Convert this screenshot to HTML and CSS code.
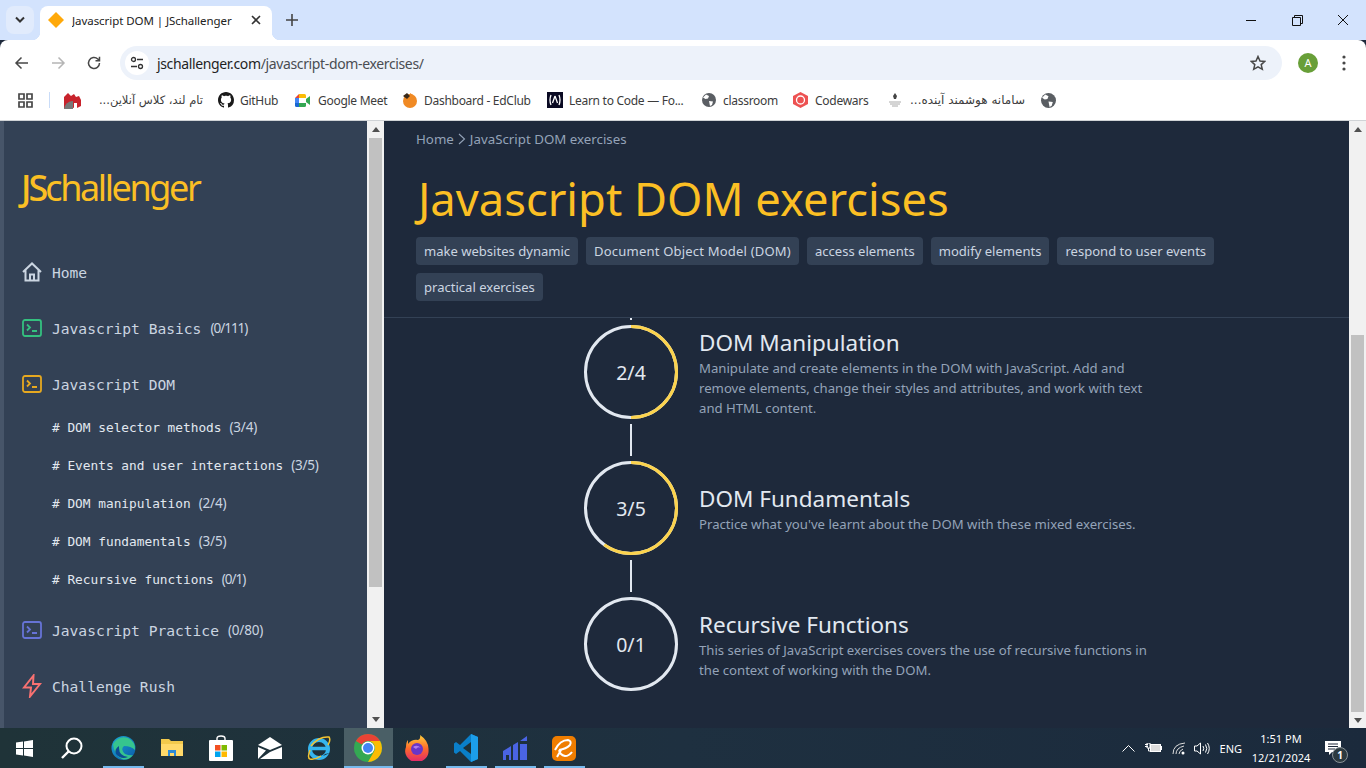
FILE: index.html
```html
<!DOCTYPE html>
<html lang="en">
<head>
<meta charset="utf-8">
<title>Javascript DOM | JSchallenger</title>
<link rel="stylesheet" href="styles.css">
</head>
<body>
<header class="tabstrip">
  <button class="tabsearch"><svg width="12" height="8" viewBox="0 0 12 8"><path d="M2 1.500 6 5.500 10 1.500" class="st-dark" stroke-width="2"/></svg></button>
  <div class="tab">
    <svg class="favicon" width="16" height="16" viewBox="0 0 16 16"><path d="M8 0 16 8 8 16 0 8Z" fill="#ffa90a"/></svg>
    <span class="tabtitle">Javascript DOM | JSchallenger</span>
    <svg class="tabclose" width="10" height="10" viewBox="0 0 10 10"><path d="M1 1 9 9M9 1 1 9" class="st-dark" stroke-width="1.600"/></svg>
  </div>
  <svg class="newtab" width="12" height="12" viewBox="0 0 12 12"><path d="M6 0V12M0 6H12" stroke="#444" stroke-width="1.600" fill="none"/></svg>
  <div class="winctl">
    <svg width="46" height="12" viewBox="0 0 46 12"><path d="M18 6.500H28" stroke="#111" stroke-width="1" fill="none"/></svg>
    <svg width="46" height="12" viewBox="0 0 46 12"><path d="M18.500 3.500H26.500V11.500H18.500ZM20.500 3.500V1.500H28.500V9.500H26.500" stroke="#111" stroke-width="1" fill="none"/></svg>
    <svg width="46" height="12" viewBox="0 0 46 12"><path d="M18 1 28 11M28 1 18 11" stroke="#111" stroke-width="1" fill="none"/></svg>
  </div>
</header>

<div class="toolbar">
  <svg class="navbtn" width="16" height="16" viewBox="0 0 16 16"><path d="M14 8H2M7.500 2.500 2 8l5.500 5.500" stroke="#474747" stroke-width="1.500" fill="none"/></svg>
  <svg class="navbtn" width="16" height="16" viewBox="0 0 16 16"><path d="M2 8H14M8.500 2.500 14 8l-5.500 5.500" stroke="#b5b5b5" stroke-width="1.500" fill="none"/></svg>
  <svg class="navbtn" width="16" height="16" viewBox="0 0 16 16"><path d="M13.500 8A5.500 5.500 0 1 1 11.800 4L13.500 5.600M13.500 1.800V5.800H9.500" stroke="#474747" stroke-width="1.500" fill="none"/></svg>
  <div class="omnibox">
    <span class="siteinfo"><svg width="14" height="14" viewBox="0 0 14 14"><circle cx="3.500" cy="3.500" r="2" stroke="#333" stroke-width="1.300" fill="none"/><path d="M7 3.500H13M1 10.500H7" stroke="#333" stroke-width="1.300"/><circle cx="10.500" cy="10.500" r="2" stroke="#333" stroke-width="1.300" fill="none"/></svg></span>
    <span class="url"><b>jschallenger.com</b>/javascript-dom-exercises/</span>
    <svg class="star" width="16" height="16" viewBox="0 0 16 16"><path d="M8 1.500 10 6l4.800.4-3.600 3.200 1.100 4.700L8 11.800l-4.300 2.500 1.100-4.700L1.200 6.400 6 6Z" stroke="#474747" stroke-width="1.500" fill="none"/></svg>
  </div>
  <span class="avatar">A</span>
  <svg class="kebab" width="4" height="16" viewBox="0 0 4 16"><circle cx="2" cy="2" r="1.600" fill="#474747"/><circle cx="2" cy="8" r="1.600" fill="#474747"/><circle cx="2" cy="14" r="1.600" fill="#474747"/></svg>
</div>

<nav class="bookmarks">
  <svg class="apps" width="15" height="15" viewBox="0 0 15 15"><path d="M1 1h5v5H1ZM9 1h5v5H9ZM1 9h5v5H1ZM9 9h5v5H9Z" stroke="#474747" stroke-width="1.700" fill="none"/></svg>
  <span class="bmsep"></span>
  <a class="bm bm-a"><svg width="17" height="17" viewBox="0 0 17 17"><path d="M0 5 4 1 7 4 10 2 12 5 15 4 17 8V14L13 16V11H10V16L5 14 0 17Z" fill="#c8232c"/><path d="M0 17A9 9 0 0 1 9 9V17Z" fill="#777"/></svg><span class="bmtext rtl" dir="rtl">تام لند، کلاس آنلاین...</span></a>
  <a class="bm bm-b"><svg width="16" height="16" viewBox="0 0 16 16"><path fill="#1a1a1a" d="M8 0C3.580 0 0 3.580 0 8c0 3.540 2.290 6.530 5.470 7.590.4.070.55-.17.55-.38 0-.19-.01-.82-.01-1.490-2.010.37-2.530-.49-2.690-.94-.09-.23-.48-.94-.82-1.130-.28-.15-.68-.52-.01-.53.630-.01 1.080.58 1.230.82.720 1.210 1.870.87 2.330.66.070-.52.280-.87.510-1.070-1.780-.2-3.640-.89-3.640-3.950 0-.87.310-1.590.820-2.150-.08-.2-.360-1.020.08-2.120 0 0 .670-.21 2.200.82.640-.18 1.320-.27 2-.27s1.360.09 2 .27c1.530-1.040 2.200-.82 2.200-.82.440 1.100.160 1.920.080 2.120.510.560.820 1.270.820 2.150 0 3.070-1.870 3.750-3.650 3.950.290.250.540.730.540 1.480 0 1.070-.01 1.930-.01 2.200 0 .210.150.460.550.380A8.010 8.010 0 0 0 16 8c0-4.420-3.580-8-8-8Z"/></svg><span class="bmtext">GitHub</span></a>
  <a class="bm bm-c"><svg width="15" height="13" viewBox="0 0 15 13"><path d="M0 4 4 0V4Z" fill="#ea4335"/><path d="M0 4H4V9H0Z" fill="#4285f4"/><path d="M0 9H4V13H1.500Q0 13 0 11.500Z" fill="#1967d2"/><path d="M4 0H9.500Q11 0 11 1.500V4H4Z" fill="#fbbc04"/><path d="M4 9H11V11.500Q11 13 9.500 13H4Z" fill="#34a853"/><path d="M11 5 15 2V11L11 8Z" fill="#34a853"/></svg><span class="bmtext">Google Meet</span></a>
  <a class="bm bm-d"><svg width="16" height="16" viewBox="0 0 16 16"><circle cx="8" cy="9" r="7" fill="#f08a24"/><path d="M1 4 5 1 8 4 5 7Z" fill="#3a2a1a"/><path d="M8 1 11 3 8 6Z" fill="#f08a24"/></svg><span class="bmtext">Dashboard - EdClub</span></a>
  <a class="bm bm-e"><svg width="16" height="16" viewBox="0 0 16 16"><rect width="16" height="16" fill="#0a0a23"/><path d="M4 3Q2 8 4 13M12 3Q14 8 12 13M8 4 5.500 11M8 4 10.500 11" stroke="#fff" stroke-width="1.300" fill="none"/></svg><span class="bmtext">Learn to Code — Fo...</span></a>
  <a class="bm bm-f"><svg width="14" height="14" viewBox="0 0 14 14"><use href="#globe"/></svg><span class="bmtext">classroom</span></a>
  <a class="bm bm-g"><svg width="15" height="16" viewBox="0 0 15 16"><path d="M7.500 0 15 4V12L7.500 16 0 12V4Z" fill="#ed5252"/><circle cx="7.500" cy="8" r="4" stroke="#fff" stroke-width="1.300" fill="none"/></svg><span class="bmtext">Codewars</span></a>
  <a class="bm bm-h"><svg width="14" height="14" viewBox="0 0 14 14"><path d="M7 0 9 3 8 6H6L5 3Z" fill="#444"/><path d="M1 9H13M2 11H12M4 13H10" stroke="#aaa" stroke-width="1"/></svg><span class="bmtext rtl" dir="rtl">سامانه هوشمند آینده...</span></a>
  <a class="bm"><svg width="15" height="15" viewBox="0 0 14 14"><use href="#globe"/></svg></a>
  <svg class="defs" width="0" height="0"><defs><g id="globe"><circle cx="7" cy="7" r="7" fill="#5a5e63"/><path d="M4 1.500 7 3 6 5.500 3.500 6 1 4.500ZM7 8 11 8.500 10 12 8 13Z" fill="#fff"/></g></defs></svg>
</nav>

<div class="page">
  <aside class="sidebar">
    <a class="logo"><b>JS</b>challenger</a>
    <ul class="menu">
      <li class="mi"><svg class="mi-icon" width="20" height="20" viewBox="0 0 20 20"><path d="M1 10 10 1.500 19 10M3.500 8V18.500H16.500V8M8 18.500V12.500H12V18.500" stroke="#cbd5e1" stroke-width="2" fill="none"/></svg><span class="mono">Home</span></li>
      <li class="mi"><svg class="mi-icon" width="20" height="18" viewBox="0 0 20 18"><rect x="1" y="1" width="18" height="16" rx="2" class="ic ic-g"/><path d="M5 5.500 8 8.500 5 11.500M10 12H15" class="ic ic-g"/></svg><span class="mono">Javascript Basics</span><span class="count tight">(0/111)</span></li>
      <li class="mi active"><svg class="mi-icon" width="20" height="18" viewBox="0 0 20 18"><rect x="1" y="1" width="18" height="16" rx="2" class="ic ic-y"/><path d="M5 5.500 8 8.500 5 11.500M10 12H15" class="ic ic-y"/></svg><span class="mono">Javascript DOM</span></li>
    </ul>
    <ul class="submenu">
      <li class="si"><span class="mono-s"># DOM selector methods</span><span class="count">(3/4)</span></li>
      <li class="si"><span class="mono-s"># Events and user interactions</span><span class="count">(3/5)</span></li>
      <li class="si"><span class="mono-s"># DOM manipulation</span><span class="count">(2/4)</span></li>
      <li class="si"><span class="mono-s"># DOM fundamentals</span><span class="count">(3/5)</span></li>
      <li class="si"><span class="mono-s"># Recursive functions</span><span class="count tight">(0/1)</span></li>
    </ul>
    <ul class="menu">
      <li class="mi"><svg class="mi-icon" width="20" height="18" viewBox="0 0 20 18"><rect x="1" y="1" width="18" height="16" rx="2" class="ic ic-i"/><path d="M5 5.500 8 8.500 5 11.500M10 12H15" class="ic ic-i"/></svg><span class="mono">Javascript Practice</span><span class="count">(0/80)</span></li>
      <li class="mi"><svg class="mi-icon" width="20" height="24" viewBox="0 0 20 24"><path d="M11.500 1.500 2 13.500H9L8 22.500 18 10H11Z" class="ic ic-r"/></svg><span class="mono">Challenge Rush</span></li>
    </ul>
  </aside>
  <div class="scrollbar sb-side">
    <span class="arrow up"></span>
    <span class="thumb"></span>
    <span class="sb-fill"></span>
    <span class="arrow down"></span>
  </div>

  <main class="main">
    <section class="head">
      <p class="crumb">Home <svg width="8" height="12" viewBox="0 0 8 12"><path d="M1 1 6.500 6 1 11" stroke="#94a3b8" stroke-width="1.100" fill="none"/></svg> JavaScript DOM exercises</p>
      <h1>Javascript DOM exercises</h1>
      <ul class="tags">
        <li>make websites dynamic</li>
        <li class="tag-wide">Document Object Model (DOM)</li>
        <li>access elements</li>
        <li>modify elements</li>
        <li>respond to user events</li>
        <li>practical exercises</li>
      </ul>
    </section>
    <section class="steps">
      <span class="tick"></span>
      <article class="step">
        <div class="ring"><svg width="94" height="94" viewBox="0 0 94 94"><circle class="r-bg" cx="47" cy="47" r="45.500"/><circle class="r-fg" cx="47" cy="47" r="45.500" pathLength="100" stroke-dasharray="50 100"/></svg><span>2/4</span></div>
        <div class="stext"><h2>DOM Manipulation</h2><p>Manipulate and create elements in the DOM with JavaScript. Add and remove elements, change their styles and attributes, and work with text and HTML content.</p></div>
      </article>
      <span class="link"></span>
      <article class="step">
        <div class="ring"><svg width="94" height="94" viewBox="0 0 94 94"><circle class="r-bg" cx="47" cy="47" r="45.500"/><circle class="r-fg" cx="47" cy="47" r="45.500" pathLength="100" stroke-dasharray="60 100"/></svg><span>3/5</span></div>
        <div class="stext"><h2>DOM Fundamentals</h2><p>Practice what you've learnt about the DOM with these mixed exercises.</p></div>
      </article>
      <span class="link"></span>
      <article class="step">
        <div class="ring"><svg width="94" height="94" viewBox="0 0 94 94"><circle class="r-bg" cx="47" cy="47" r="45.500"/></svg><span>0/1</span></div>
        <div class="stext"><h2>Recursive Functions</h2><p>This series of JavaScript exercises covers the use of recursive functions in the context of working with the DOM.</p></div>
      </article>
    </section>
  </main>
  <div class="scrollbar sb-main">
    <span class="arrow up"></span>
    <span class="thumb"></span>
    <span class="sb-fill"></span>
    <span class="arrow down"></span>
  </div>
</div>

<footer class="taskbar">
  <span class="tb tb-w"><svg width="17" height="17" viewBox="0 0 17 17"><path d="M0 2.500 7 1.500V8H0ZM8 1.400 17 0V8H8ZM0 9H7V15.500L0 14.500ZM8 9H17V17L8 15.600Z" fill="#fff"/></svg></span>
  <span class="tb tb-w"><svg width="24" height="24" viewBox="0 0 24 24"><circle cx="14" cy="10" r="7.500" stroke="#fff" stroke-width="2" fill="none"/><path d="M8.500 15.500 2 22" stroke="#fff" stroke-width="2.400"/></svg></span>
  <span class="tb on tb-first"><svg width="25" height="26" viewBox="0 0 25 26"><defs><linearGradient id="eg" x1="0" y1="0" x2="1" y2="1"><stop offset="0" stop-color="#1aa5d6"/><stop offset="1" stop-color="#0b5aa8"/></linearGradient></defs><circle cx="12.500" cy="13" r="12" fill="url(#eg)"/><path d="M2 9Q8 0 17 3 25 7 24 15 20 11 13 11 9 14 14 19 19 21 22 20 17 26 11 24 3 20 2 9Z" fill="#36c48e"/><path d="M8 13Q8 21 17 22 10 25 5 19 3 14 8 11Z" fill="#0c4c94"/></svg></span>
  <span class="tb"><svg width="22" height="20" viewBox="0 0 22 20"><path d="M0 1H8L10 3H22V18H0Z" fill="#f2c94c"/><path d="M0 6H22V18H0Z" fill="#ffd96a"/><path d="M7 12H15V18H13V15H9V18H7Z" fill="#2d8ad6"/></svg></span>
  <span class="tb"><svg width="24" height="26" viewBox="0 0 24 26"><path d="M8 6V3.500Q8 1 12 1 16 1 16 3.500V6" stroke="#fff" stroke-width="1.400" fill="none"/><rect x="0" y="5" width="24" height="21" rx="1" fill="#fff"/><rect x="6" y="10" width="5.500" height="5.500" fill="#f25022"/><rect x="12.500" y="10" width="5.500" height="5.500" fill="#7fba00"/><rect x="6" y="16.500" width="5.500" height="5.500" fill="#00a4ef"/><rect x="12.500" y="16.500" width="5.500" height="5.500" fill="#ffb900"/></svg></span>
  <span class="tb"><svg width="24" height="22" viewBox="0 0 24 22"><path d="M0 8 12 0 24 8 12 13Z" fill="#fff"/><path d="M0 10 8 13.500 0 22ZM24 10V22H2L12 15Z" fill="#fff"/></svg></span>
  <span class="tb"><svg width="24" height="24" viewBox="0 0 24 24"><circle cx="12" cy="13" r="9" stroke="#35b5ee" stroke-width="4" fill="none"/><path d="M5 12.500H20" stroke="#35b5ee" stroke-width="3.500"/><path d="M18 18 23 17 16 20Z" fill="#1e3138"/><path d="M4 10Q12 0 22 1 24 4 21 9M3 14Q0 22 3 23 8 24 14 20" stroke="#f4c430" stroke-width="1.500" fill="none"/></svg></span>
  <span class="tb on cur"><svg width="28" height="28" viewBox="0 0 28 28"><circle cx="14" cy="14" r="14" fill="#34a853"/><path d="M14 0A14 14 0 0 1 26.100 7H14A7 7 0 0 0 7.900 10.500L1.900 7A14 14 0 0 1 14 0Z" fill="#ea4335"/><path d="M26.100 7A14 14 0 0 1 14 28L20 17.500A7 7 0 0 0 20 10.500 7 7 0 0 0 14 7Z" fill="#fbbc04"/><circle cx="14" cy="14" r="6.500" fill="#fff"/><circle cx="14" cy="14" r="5" fill="#4285f4"/></svg></span>
  <span class="tb"><svg width="24" height="26" viewBox="0 0 24 26"><defs><linearGradient id="ff" x1="0" y1="0" x2="0" y2="1"><stop offset="0" stop-color="#ffcf3a"/><stop offset=".5" stop-color="#ff6a2b"/><stop offset="1" stop-color="#e2266e"/></linearGradient></defs><path d="M15 0Q24 6 23.500 15A11.700 11 0 1 1 1 12Q1 7 3 5V9Q7 4 13 5 16 4 15 0Z" fill="url(#ff)"/><circle cx="12" cy="14" r="6" fill="#6a35c8"/><path d="M8 12Q12 9 16 13 13 11 11 14Z" fill="#b07cf0"/></svg></span>
  <span class="tb on"><svg width="24" height="28" viewBox="0 0 24 28"><path d="M17 0 24 3V25L17 28 6 17 2 20 0 18.500V9.500L2 8 6 11Z" fill="#0a7fc9"/><path d="M17 0 24 3V25L17 28Z" fill="#1c9eea"/><path d="M17 8V20L9 14Z" fill="#1e3138"/></svg></span>
  <span class="tb on"><svg width="24" height="24" viewBox="0 0 24 24"><path d="M0 15 8 10V24H6V19H3V24H0ZM10 9 15 6V24H10ZM17 5 24 0V5H17ZM17 8H24V24H17Z" fill="#4a64e4"/></svg></span>
  <span class="tb on"><svg width="24" height="25" viewBox="0 0 24 25"><rect width="24" height="25" rx="5" fill="#ef7d00"/><path d="M3 14Q8 4 16 4 20 5 18 9 14 13 7 14M7 14Q8 19 13 20 17 20 20 16M5 21 9 14" stroke="#fff" stroke-width="2" fill="none"/></svg></span>
  <span class="tray">
    <svg width="13" height="8" viewBox="0 0 13 8"><path d="M.5 7.500 6.500 1.500 12.500 7.500" stroke="#fff" stroke-width="1" fill="none"/></svg>
    <svg class="t-batt" width="17" height="10" viewBox="0 0 17 10"><path d="M0 1.500H3M0 3.500H3M2 0H5V5H2ZM3.500 5V8H5" stroke="#fff" stroke-width="1" fill="none"/><rect x="5.500" y="1.500" width="10" height="7" stroke="#fff" fill="#ddd"/><rect x="16" y="3" width="1" height="4" fill="#fff"/></svg>
    <svg class="t-wifi" width="14" height="13" viewBox="0 0 14 13"><path d="M1 12Q1 2 13 1M4 12Q4 6 12 4M7 12Q7 9 11 7" stroke="#ddd" stroke-width="1" fill="none"/><circle cx="11" cy="11" r="1.500" fill="#fff"/></svg>
    <svg class="t-vol" width="16" height="13" viewBox="0 0 16 13"><path d="M.5 4H3L6.500 1V12L3 9H.5ZM9 4Q10.500 6.500 9 9M11.500 2.500Q14 6.500 11.500 10.500M13.500 1Q17 6.500 13.500 12" stroke="#fff" stroke-width="1" fill="none"/></svg>
    <span class="lang">ENG</span>
    <span class="clock"><span>1:51 PM</span><span>12/21/2024</span></span>
    <span class="notif"><svg width="16" height="14" viewBox="0 0 16 14"><path d="M0 0H16V11H7L4 14V11H0Z" fill="#fff"/><path d="M3 3H13M3 5.500H13M3 8H10" stroke="#1e293b" stroke-width="1"/></svg><span class="badge">1</span></span>
  </span>
</footer>
</body>
</html>
```

FILE: styles.css
```css
* { box-sizing: border-box; }
html, body { margin: 0; padding: 0; }
body {
  width: 1366px; height: 768px; overflow: hidden;
  display: flex; flex-direction: column;
  font-family: "Noto Sans", "DejaVu Sans", sans-serif;
  background: #1e293b;
}
ul { list-style: none; margin: 0; padding: 0; }
p, h1, h2 { margin: 0; font-weight: 400; }
svg { display: block; flex: none; }
.st-dark { stroke: #333; fill: none; }

/* tab strip */
.tabstrip { height: 40px; flex: none; background: #d3e3fd; display: flex; padding: 6px 0 0 6px; position: relative; }
.tabsearch { width: 28px; height: 28px; border: 0; border-radius: 8px; background: #e1ebfc; display: flex; align-items: center; justify-content: center; padding: 0; }
.tab { width: 232px; height: 34px; margin-left: 6px; background: #fff; border-radius: 8px 8px 0 0; display: flex; align-items: center; padding: 0 11px 6px 8px; position: relative; }
.tab::before, .tab::after { content: ""; position: absolute; bottom: 0; width: 8px; height: 8px; }
.tab::before { left: -8px; background: radial-gradient(circle at 0 0, #d3e3fd 8px, #fff 8.500px); }
.tab::after { right: -8px; background: radial-gradient(circle at 100% 0, #d3e3fd 8px, #fff 8.500px); }
.favicon { margin-right: 8px; }
.tabtitle { font-size: 11.500px; letter-spacing: -.06px; color: #222; flex: 1; white-space: nowrap; overflow: hidden; }
.newtab { margin: 8px 0 0 14px; }
.winctl { margin-left: auto; display: flex; gap: 0; padding: 8px 0 0 0; height: 28px; }

/* toolbar */
.toolbar { height: 40px; flex: none; background: #fff; border-radius: 8px 8px 0 0; display: flex; align-items: center; padding: 6px 0 0 14px; }
.navbtn { margin-right: 20px; }
.navbtn:nth-child(3) { margin-right: 18px; }
.omnibox { width: 1162px; height: 34px; background: #edf2fa; border-radius: 17px; display: flex; align-items: center; padding: 0 16px 0 5px; }
.siteinfo { width: 24px; height: 24px; border-radius: 50%; background: #fff; display: flex; align-items: center; justify-content: center; margin-right: 8px; }
.url { font-size: 14px; color: #4a4d52; flex: 1; letter-spacing: -.36px; }
.url b { font-weight: 400; color: #1f1f1f; }
.avatar { width: 20px; height: 20px; border-radius: 50%; background: #689f38; color: #fff; font-size: 11px; line-height: 20px; text-align: center; margin-left: 16px; }
.kebab { margin-left: 24px; }

/* bookmarks */
.bookmarks { height: 41px; flex: none; background: #fff; border-bottom: 1px solid #d0d3d6; display: flex; align-items: center; padding-left: 18px; font-size: 12px; color: #3c3c3c; }
.bmsep { width: 1px; height: 16px; background: #c9dcf8; margin: 0 14px 0 16px; }
.bm { display: flex; align-items: center; gap: 6px; white-space: nowrap; }
.bmtext { letter-spacing: -.28px; }
.bmtext.rtl { font-family: "DejaVu Sans", sans-serif; font-size: 11.500px; letter-spacing: 0; }
.bm-a { width: 154px; gap: 18px; }
.bm-a .bmtext { width: 104px; }
.bm-b { width: 77px; }
.bm-c { width: 107px; gap: 6px; }
.bm-c svg { margin-right: 2px; }
.bm-d { width: 145px; }
.bm-e { width: 155px; }
.bm-f { width: 91px; gap: 7px; }
.bm-g { width: 95px; gap: 7px; }
.bm-h { width: 153px; gap: 9px; }
.bm-h .bmtext { width: 114px; font-size: 12px; }
.defs { position: absolute; }

/* page */
.page { flex: 1; min-height: 0; display: flex; }
.sidebar { width: 367px; flex: none; background: #334155; border-left: 4px solid #475569; overflow: hidden; }
.logo { display: block; margin: 47px 0 36px 17px; font-size: 36px; line-height: 40px; color: #fbbf24; letter-spacing: -2.400px; white-space: nowrap; }
.logo b { font-weight: 500; letter-spacing: -3px; }
.menu { display: block; }
.mi { height: 56px; display: flex; align-items: center; padding-left: 18px; position: relative; color: #cbd5e1; }
.mi-icon { margin-right: 10px; }
.mi .count { margin-left: 9px; }
.mi.active::before { content: ""; position: absolute; left: -4px; top: 0; bottom: 0; width: 4px; background: #fcd34d; }
.mono { font-family: "DejaVu Sans Mono", monospace; font-size: 14.600px; color: #cbd5e1; }
.mono-s { font-family: "DejaVu Sans Mono", monospace; font-size: 12.800px; color: #e2e8f0; }
.count { font-size: 13.500px; color: #cbd5e1; margin-left: 8px; letter-spacing: -.2px; }
.count.tight { letter-spacing: -1px; }
.submenu { margin-top: -4px; margin-bottom: 4px; }
.si { height: 38px; display: flex; align-items: center; padding-left: 48px; }
.ic { fill: none; stroke-width: 1.800; }
.ic-g { stroke: #34c07f; }
.ic-y { stroke: #e6a820; }
.ic-i { stroke: #6673d6; }
.ic-r { stroke: #f87171; stroke-width: 2; }

/* scrollbars */
.scrollbar { width: 17px; flex: none; background: #f1f1f1; display: flex; flex-direction: column; align-items: center; }
.arrow { width: 17px; height: 17px; flex: none; display: flex; align-items: center; justify-content: center; }
.arrow::after { content: ""; border-left: 4px solid transparent; border-right: 4px solid transparent; }
.arrow.up::after { border-bottom: 5px solid #505050; }
.arrow.down::after { border-top: 5px solid #505050; }
.thumb { width: 13px; background: #c1c1c1; flex: none; }
.sb-fill { flex: 1; }
.sb-side .thumb { height: 449px; }
.sb-main .thumb { height: 377px; margin-top: 197px; }

/* main */
.main { flex: 1; min-width: 0; background: #1e293b; overflow: hidden; }
.head { padding: 8px 32px 16px; border-bottom: 1px solid #334155; height: 197px; }
.crumb { font-size: 13.300px; line-height: 20px; color: #94a3b8; display: flex; align-items: center; gap: 4px; }
h1 { font-size: 45.300px; line-height: 60px; color: #fbbf24; margin: 20px 0 8px 2px; white-space: nowrap; }
.tags { display: flex; flex-wrap: wrap; gap: 8px; max-width: 830px; }
.tags li { height: 28px; padding: 0 8px; background: #334155; border-radius: 4px; font-size: 13.050px; line-height: 28px; color: #cbd5e1; white-space: nowrap; }
.tags .tag-wide { letter-spacing: .18px; }
.steps { padding-left: 200px; display: flex; flex-direction: column; }
.tick { width: 2px; height: 2px; background: #e2e8f0; margin: 0 0 5px 46px; }
.link { width: 2px; height: 32px; background: #e2e8f0; margin: 5px 0 5px 46px; }
.step { display: flex; align-items: center; height: 94px; gap: 21px; }
.ring { width: 94px; height: 94px; flex: none; display: grid; place-items: center; color: #e2e8f0; font-size: 19.500px; }
.ring svg, .ring span { grid-area: 1 / 1; }
.ring span { padding-top: 1px; }
.ring svg { transform: rotate(-90deg); }
.r-bg, .r-fg { fill: none; stroke-width: 3; }
.r-bg { stroke: #e2e8f0; }
.r-fg { stroke: #fcd34d; }
.stext { width: 455px; padding-top: 2px; }
h2 { font-size: 22.500px; line-height: 30px; color: #e2e8f0; white-space: nowrap; }
.stext p { font-size: 13.170px; line-height: 20px; color: #94a3b8; }

/* taskbar */
.taskbar { height: 40px; flex: none; background: linear-gradient(90deg, #1f3338 0%, #1e3040 50%, #1b2a3c 100%); display: flex; align-items: stretch; color: #fff; }
.tb { width: 49px; flex: none; display: flex; align-items: center; justify-content: center; position: relative; }
.tb-w { width: 48px; }
.tb-first { margin-left: 2.500px; }
.tb.on::after { content: ""; position: absolute; left: 4px; right: 4px; bottom: 0; height: 2px; background: #76b9ed; }
.tb.cur { background: #4a5f66; }
.tb.cur::after { left: 0; right: 0; }
.tray { margin-left: auto; display: flex; align-items: center; font-size: 11px; }
.t-batt { margin-left: 10px; }
.t-wifi { margin-left: 10px; }
.t-vol { margin-left: 8px; }
.lang { margin-left: 10px; }
.clock { display: flex; flex-direction: column; align-items: center; margin-left: 10px; line-height: 19px; width: 58px; white-space: nowrap; }
.notif { margin: 0 25px 0 15px; position: relative; display: block; width: 16px; height: 14px; }
.badge { position: absolute; left: 7px; top: 6px; width: 16px; height: 16px; border-radius: 50%; background: #2c3a40; border: 1px solid #8a9398; font-size: 10px; line-height: 14px; text-align: center; font-weight: 700; }
```
